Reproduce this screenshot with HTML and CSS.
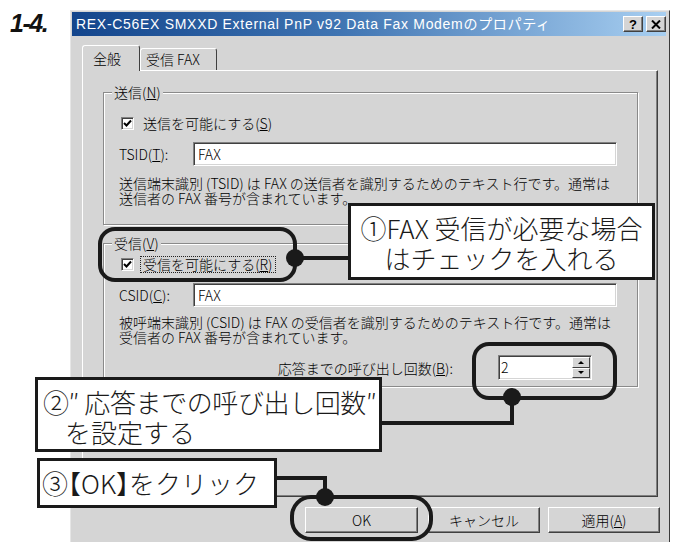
FILE: index.html
```html
<!DOCTYPE html>
<html lang="ja">
<head>
<meta charset="utf-8">
<title>モデムのプロパティ</title>
<link rel="stylesheet" href="styles.css">
</head>
<body>
<div class="sheet">
  <div class="step">1-4.</div>

  <div class="win">
    <div class="titlebar">
      <span class="title">REX-C56EX SMXXD External PnP v92 Data Fax Modemのプロパティ</span>
      <span class="tbtn help">?</span>
      <span class="tbtn close">
        <svg width="10" height="9" viewBox="0 0 10 9"><path d="M1 0.5 L9 8.5 M9 0.5 L1 8.5" stroke="#000" stroke-width="2"/></svg>
      </span>
    </div>

    <div class="winbody">
      <div class="tabs">
        <span class="tab on">全般</span>
        <span class="tab">受信 FAX</span>
      </div>

      <div class="panel">
        <div class="group send">
          <span class="group-title">送信(<u>N</u>)</span>
          <div class="chk-row">
            <span class="chk"><svg width="9" height="9" viewBox="0 0 9 9"><path d="M1 4 L3.5 6.5 L8 1.5" fill="none" stroke="#000" stroke-width="2"/></svg></span>
            <span class="chk-label">送信を可能にする(<u>S</u>)</span>
          </div>
          <div class="field-row">
            <span class="lbl">TSID(<u>T</u>):</span>
            <span class="field">FAX</span>
          </div>
          <p class="desc">送信端末識別 (TSID) は FAX の送信者を識別するためのテキスト行です。通常は<br>送信者の FAX 番号が含まれています。</p>
        </div>

        <div class="group recv">
          <span class="group-title">受信(<u>V</u>)</span>
          <div class="chk-row">
            <span class="chk"><svg width="9" height="9" viewBox="0 0 9 9"><path d="M1 4 L3.5 6.5 L8 1.5" fill="none" stroke="#000" stroke-width="2"/></svg></span>
            <span class="chk-label focus">受信を可能にする(<u>R</u>)</span>
          </div>
          <div class="field-row">
            <span class="lbl">CSID(<u>C</u>):</span>
            <span class="field">FAX</span>
          </div>
          <p class="desc desc-recv">被呼端末識別 (CSID) は FAX の受信者を識別するためのテキスト行です。通常は<br>受信者の FAX 番号が含まれています。</p>
          <div class="rings-row">
            <span class="rings-lbl">応答までの呼び出し回数(<u>B</u>):</span>
            <span class="spin">
              <span class="spin-val">2</span>
              <span class="spin-btns">
                <span class="spin-btn"><i class="arr-up"></i></span>
                <span class="spin-btn"><i class="arr-down"></i></span>
              </span>
            </span>
          </div>
        </div>
      </div>

      <div class="btns">
        <span class="btn ok">OK</span>
        <span class="btn cancel">キャンセル</span>
        <span class="btn apply">適用(<u>A</u>)</span>
      </div>
    </div>
  </div>

  <svg class="marks" width="674" height="542" viewBox="0 0 674 542">
    <g fill="none" stroke="#1a1a1a" stroke-width="4">
      <rect x="100" y="229" width="195" height="51" rx="15"/>
      <line x1="295" y1="258" x2="350" y2="258"/>
      <rect x="474" y="344" width="141" height="54" rx="15"/>
      <polyline points="512,398 512,423 380,423"/>
      <polyline points="275,478 325,478 325,497"/>
      <rect x="292" y="497" width="139" height="42" rx="19"/>
    </g>
    <g fill="#1a1a1a">
      <circle cx="295" cy="258" r="9"/>
      <circle cx="512" cy="397" r="9"/>
      <circle cx="325" cy="497" r="9"/>
    </g>
  </svg>

  <div class="note note-fax">①FAX 受信が必要な場合<br>はチェックを入れる</div>
  <div class="note note-rings"><span class="ln ln1">②″ 応答までの呼び出し回数″</span><span class="ln ln2">を設定する</span></div>
  <div class="note note-ok">③【OK】をクリック</div>
</div>
</body>
</html>
```

FILE: styles.css
```css
*{margin:0; padding:0; box-sizing:border-box;}
body{background:#fff; font-family:"Noto Sans CJK JP", "Liberation Sans", sans-serif; color:#000;}
u{text-decoration:underline; text-underline-offset:1px;}

.sheet{position:relative; width:674px; height:542px; overflow:hidden; display:flex; align-items:flex-start; padding-top:10px;}
.step{width:70px; padding-left:10px; font:italic bold 25px/26px "Liberation Sans", sans-serif; letter-spacing:-1.5px; color:#111;}

/* dialog window */
.win{width:600px; height:560px; flex:none; background:#d5d5d5; border:1px solid; border-color:#e6e6e6 #3a3a3a #3a3a3a #e6e6e6; padding:1px 3px 0 1px; font-size:14px; font-weight:300;}
.titlebar{height:24px; display:flex; align-items:center; padding-left:4px; background:linear-gradient(to right, #13458c, #3f74b2 45%, #a8cff1); color:#fff;}
.title{flex:1; white-space:nowrap; font-family:"Liberation Sans", "Noto Sans CJK JP", sans-serif; font-size:14px; font-weight:400; letter-spacing:0.7px; line-height:24px;}
.tbtn{width:20px; height:16px; margin-left:3px; display:flex; align-items:center; justify-content:center; background:#d5d5d5; border:1px solid; border-color:#fff #404040 #404040 #fff; box-shadow:inset -1px -1px 0 #808080; color:#000; font:bold 13px/1 "Liberation Sans", sans-serif;}

.winbody{padding:9px 8px 0 10px;}

.tabs{display:flex; align-items:flex-end; height:25px;}
.tab{height:22px; border:1px solid; border-bottom:0; border-color:#fff #404040 transparent #fff; border-radius:3px 3px 0 0; line-height:20px; white-space:nowrap;}
.tab.on{width:58px; height:26px; padding-left:10px; margin-bottom:-1px; position:relative; z-index:1; background:#d5d5d5; line-height:24px;}
.tab + .tab{width:77px; padding-left:5px;}

.panel{height:427px; border:1px solid; border-color:#fff #404040 #404040 #fff; box-shadow:inset -1px -1px 0 #808080; padding:21px 19px 0 20px;}

.group{position:relative; border:1px solid #8a8a8a; box-shadow:inset 1px 1px 0 #fff, 1px 1px 0 #fff; padding:0 20px 0 15px;}
.group-title{position:absolute; left:8px; top:-9px; padding:0 2px; background:#d5d5d5; line-height:17px;}
.send{padding-top:22px; padding-bottom:18px;}
.recv{margin-top:18px; padding-top:12px; padding-bottom:6px;}

.chk-row{display:flex; align-items:center; height:17px;}
.chk{width:13px; height:13px; margin-left:2px; display:flex; align-items:center; justify-content:center; background:#fff; border:1px solid; border-color:#808080 #fff #fff #808080; box-shadow:inset 1px 1px 0 #404040, inset -1px -1px 0 #d5d5d5;}
.chk-label{margin-left:6px; padding:0 2px; border:1px dotted transparent; line-height:15px;}
.chk-label.focus{border-color:#222;}

.field-row{display:flex; align-items:center; margin-top:10px;}
.lbl{width:74px; white-space:nowrap;}
.field{width:424px; height:24px; display:flex; align-items:center; padding-left:4px; background:#fff; border:1px solid; border-color:#808080 #fff #fff #808080; box-shadow:inset 1px 1px 0 #404040, inset -1px -1px 0 #d5d5d5;}

.desc{margin-top:10px; line-height:15px; white-space:nowrap;}
.desc-recv{margin-top:8px;}

.rings-row{display:flex; align-items:center; justify-content:flex-end; margin-top:10px; padding-right:25px;}
.rings-lbl{margin-right:45px; white-space:nowrap;}
.spin{width:94px; height:25px; display:flex; background:#fff; border:1px solid; border-color:#808080 #fff #fff #808080; box-shadow:inset 1px 1px 0 #404040, inset -1px -1px 0 #d5d5d5; padding:1px;}
.spin-val{flex:1; padding-left:1px; line-height:21px;}
.spin-btns{width:18px; display:flex; flex-direction:column;}
.spin-btn{flex:1; display:flex; align-items:center; justify-content:center; background:#d5d5d5; border:1px solid; border-color:#fff #404040 #404040 #fff;}
.arr-up{width:0; height:0; border-left:3px solid transparent; border-right:3px solid transparent; border-bottom:3px solid #000;}
.arr-down{width:0; height:0; border-left:3px solid transparent; border-right:3px solid transparent; border-top:3px solid #000;}

.btns{display:flex; margin-top:10px; margin-right:-2px; padding-left:223px;}
.btn{flex:none; height:26px; display:flex; align-items:center; justify-content:center; background:#d5d5d5; border:1px solid; border-color:#fff #404040 #404040 #fff; box-shadow:inset -1px -1px 0 #808080; white-space:nowrap;}
.ok{width:113px;}
.cancel{width:112px; margin-left:10px;}
.apply{width:112px; margin-left:8px;}

/* callouts over the dialog */
.marks{position:absolute; left:0; top:0;}
.note{position:absolute; background:#fff; border:3px solid #1a1a1a; font-size:26px; font-weight:300; line-height:30px; color:#1a1a1a; white-space:nowrap; padding-top:7px;}
.note-fax{left:348px; top:203px; width:307px; height:77px; text-align:center;}
.note-rings{left:35px; top:377px; width:347px; height:75px; padding-left:5px;}
.note-rings .ln{display:block;}
.note-rings .ln1{letter-spacing:-0.4px;}
.note-rings .ln2{padding-left:22px;}
.note-ok{left:37px; top:458px; width:240px; height:50px; padding-left:2px; font-feature-settings:"halt" 1;}
```
